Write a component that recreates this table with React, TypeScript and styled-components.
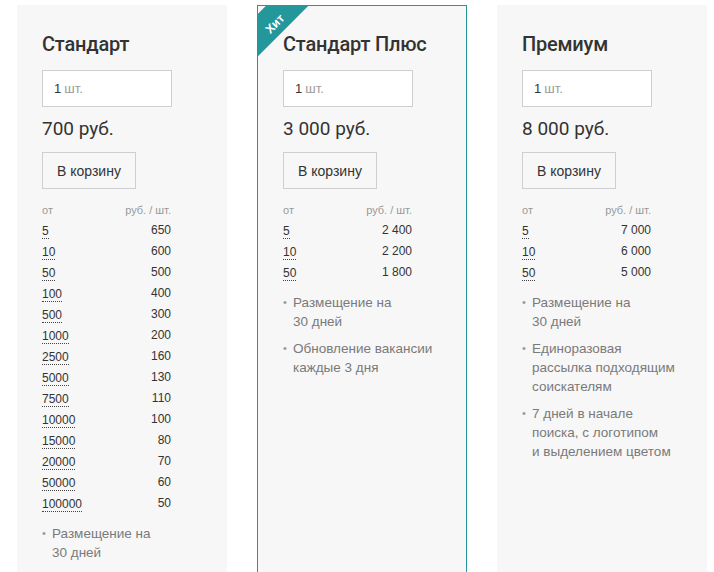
import React from "react";
import styled, { createGlobalStyle } from "styled-components";

const GlobalStyle = createGlobalStyle`
  html, body { margin: 0; padding: 0; background: #ffffff; }
  body { font-family: "Liberation Sans", Arial, sans-serif; color: #333; }
`;

const TEAL = "#23979a";

const Page = styled.div`
  display: flex;
  align-items: stretch;
  gap: 30px;
  padding: 5px 0 0 17px;
`;

const Card = styled.div<{ $featured?: boolean }>`
  position: relative;
  overflow: hidden;
  box-sizing: border-box;
  width: 210px;
  background: #f7f7f7;
  border: 1px solid ${(p) => (p.$featured ? TEAL : "#f7f7f7")};
  padding: 26px 24px 26px ${(p) => (p.$featured ? "25px" : "24px")};
`;

const Ribbon = styled.div`
  position: absolute;
  left: -36px;
  top: 0px;
  width: 100px;
  height: 30px;
  box-sizing: border-box;
  padding-top: 7px;
  background: ${TEAL};
  transform: rotate(-45deg);
  display: flex;
  align-items: center;
  justify-content: center;
  color: #fff;
  font-family: "Liberation Sans", Arial, sans-serif;
  font-size: 12px;
  font-weight: 700;
  line-height: 14px;
`;

const Title = styled.h2`
  margin: 0;
  font-family: Roboto, "Liberation Sans", sans-serif;
  font-weight: 500;
  font-size: 20px;
  line-height: 24px;
  color: #333;
  letter-spacing: -0.2px;
`;

const QtyBox = styled.div`
  margin-top: 14px;
  box-sizing: border-box;
  width: 130px;
  height: 37px;
  background: #fff;
  border: 1px solid #cfcfcf;
  padding-left: 11px;
  display: flex;
  align-items: center;
  font-size: 13px;
  color: #333;
`;

const Unit = styled.span`
  margin-left: 3px;
  color: #9a9a9a;
`;

const Price = styled.div`
  margin-top: 10px;
  font-family: Roboto, "Liberation Sans", sans-serif;
  font-size: 19px;
  line-height: 24px;
  color: #333;
`;

const CartButton = styled.button`
  display: block;
  margin-top: 11px;
  box-sizing: border-box;
  height: 37px;
  padding: 0 14px;
  background: transparent;
  border: 1px solid #cfcfcf;
  border-radius: 0;
  font-family: "Liberation Sans", Arial, sans-serif;
  font-size: 14px;
  color: #333;
`;

const Table = styled.div`
  margin-top: 13px;
  width: 129px;
  display: grid;
  grid-template-columns: 1fr auto;
`;

const HeadCell = styled.div<{ $right?: boolean }>`
  height: 17px;
  line-height: 17px;
  font-size: 11px;
  color: #999;
  text-align: ${(p) => (p.$right ? "right" : "left")};
`;

const Cell = styled.div<{ $right?: boolean }>`
  height: 21px;
  display: flex;
  align-items: center;
  justify-content: ${(p) => (p.$right ? "flex-end" : "flex-start")};
  font-size: 12px;
  color: #333;
`;

const Qty = styled.span`
  display: inline-block;
  line-height: 14px;
  border-bottom: 1px dotted #444;
  padding-top: 3px;
`;

const Features = styled.ul`
  margin: 11px 0 0;
  padding: 0;
  list-style: none;
`;

const Feature = styled.li`
  display: flex;
  font-size: 13.5px;
  line-height: 19px;
  color: #7a7a7a;
  & + & {
    margin-top: 8px;
  }
`;

const Bullet = styled.span`
  flex: 0 0 10px;
  color: #999;
  font-size: 11px;
`;

const FeatureText = styled.span`
  white-space: nowrap;
`;

type Plan = {
  title: string;
  price: string;
  featured?: boolean;
  rows: [string, string][];
  features: string[][];
};

const plans: Plan[] = [
  {
    title: "Стандарт",
    price: "700 руб.",
    rows: [
      ["5", "650"],
      ["10", "600"],
      ["50", "500"],
      ["100", "400"],
      ["500", "300"],
      ["1000", "200"],
      ["2500", "160"],
      ["5000", "130"],
      ["7500", "110"],
      ["10000", "100"],
      ["15000", "80"],
      ["20000", "70"],
      ["50000", "60"],
      ["100000", "50"],
    ],
    features: [["Размещение на", "30 дней"]],
  },
  {
    title: "Стандарт Плюс",
    price: "3 000 руб.",
    featured: true,
    rows: [
      ["5", "2 400"],
      ["10", "2 200"],
      ["50", "1 800"],
    ],
    features: [
      ["Размещение на", "30 дней"],
      ["Обновление вакансии", "каждые 3 дня"],
    ],
  },
  {
    title: "Премиум",
    price: "8 000 руб.",
    rows: [
      ["5", "7 000"],
      ["10", "6 000"],
      ["50", "5 000"],
    ],
    features: [
      ["Размещение на", "30 дней"],
      ["Единоразовая", "рассылка подходящим", "соискателям"],
      ["7 дней в начале", "поиска, с логотипом", "и выделением цветом"],
    ],
  },
];

const PlanCard: React.FC<{ plan: Plan }> = ({ plan }) => (
  <Card $featured={plan.featured}>
    {plan.featured && <Ribbon>Хит</Ribbon>}
    <Title>{plan.title}</Title>
    <QtyBox>
      1<Unit>шт.</Unit>
    </QtyBox>
    <Price>{plan.price}</Price>
    <CartButton>В корзину</CartButton>
    <Table>
      <HeadCell>от</HeadCell>
      <HeadCell $right>руб. / шт.</HeadCell>
      {plan.rows.map(([q, p]) => (
        <React.Fragment key={q}>
          <Cell>
            <Qty>{q}</Qty>
          </Cell>
          <Cell $right>{p}</Cell>
        </React.Fragment>
      ))}
    </Table>
    <Features>
      {plan.features.map((lines, i) => (
        <Feature key={i}>
          <Bullet>•</Bullet>
          <FeatureText>
            {lines.map((l, j) => (
              <React.Fragment key={j}>
                {j > 0 && <br />}
                {l}
              </React.Fragment>
            ))}
          </FeatureText>
        </Feature>
      ))}
    </Features>
  </Card>
);

export default function App() {
  return (
    <>
      <GlobalStyle />
      <Page>
        {plans.map((p) => (
          <PlanCard key={p.title} plan={p} />
        ))}
      </Page>
    </>
  );
}
